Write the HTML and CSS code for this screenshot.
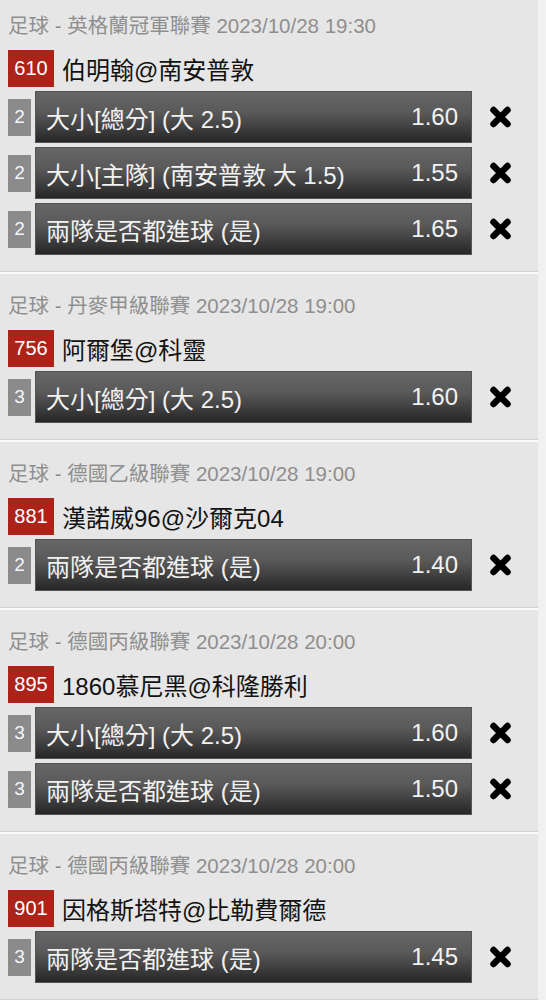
FILE: index.html
```html
<!DOCTYPE html>
<html lang="zh-Hant">
<head>
    <meta charset="utf-8">
    <title>投注單</title>
    <link rel="stylesheet" href="styles.css">
</head>
<body>

    <div class="slip">

        <section class="match">
            <div class="league">足球 - 英格蘭冠軍聯賽 2023/10/28 19:30</div>
            <div class="teams"><span class="code">610</span><span class="name">伯明翰@南安普敦</span></div>
            <div class="bet">
                <span class="count">2</span>
                <div class="bar"><span class="pick">大小[總分] (大 2.5)</span><span class="odds">1.60</span></div>
                <span class="remove"><svg viewBox="0 0 24 24" width="25" height="24"><path d="M5 5L19 19M19 5L5 19" /></svg></span>
            </div>
            <div class="bet">
                <span class="count">2</span>
                <div class="bar"><span class="pick">大小[主隊] (南安普敦 大 1.5)</span><span class="odds">1.55</span></div>
                <span class="remove"><svg viewBox="0 0 24 24" width="25" height="24"><path d="M5 5L19 19M19 5L5 19" /></svg></span>
            </div>
            <div class="bet">
                <span class="count">2</span>
                <div class="bar"><span class="pick">兩隊是否都進球 (是)</span><span class="odds">1.65</span></div>
                <span class="remove"><svg viewBox="0 0 24 24" width="25" height="24"><path d="M5 5L19 19M19 5L5 19" /></svg></span>
            </div>
        </section>

        <section class="match">
            <div class="league">足球 - 丹麥甲級聯賽 2023/10/28 19:00</div>
            <div class="teams"><span class="code">756</span><span class="name">阿爾堡@科靈</span></div>
            <div class="bet">
                <span class="count">3</span>
                <div class="bar"><span class="pick">大小[總分] (大 2.5)</span><span class="odds">1.60</span></div>
                <span class="remove"><svg viewBox="0 0 24 24" width="25" height="24"><path d="M5 5L19 19M19 5L5 19" /></svg></span>
            </div>
        </section>

        <section class="match">
            <div class="league">足球 - 德國乙級聯賽 2023/10/28 19:00</div>
            <div class="teams"><span class="code">881</span><span class="name">漢諾威96@沙爾克04</span></div>
            <div class="bet">
                <span class="count">2</span>
                <div class="bar"><span class="pick">兩隊是否都進球 (是)</span><span class="odds">1.40</span></div>
                <span class="remove"><svg viewBox="0 0 24 24" width="25" height="24"><path d="M5 5L19 19M19 5L5 19" /></svg></span>
            </div>
        </section>

        <section class="match">
            <div class="league">足球 - 德國丙級聯賽 2023/10/28 20:00</div>
            <div class="teams"><span class="code">895</span><span class="name">1860慕尼黑@科隆勝利</span></div>
            <div class="bet">
                <span class="count">3</span>
                <div class="bar"><span class="pick">大小[總分] (大 2.5)</span><span class="odds">1.60</span></div>
                <span class="remove"><svg viewBox="0 0 24 24" width="25" height="24"><path d="M5 5L19 19M19 5L5 19" /></svg></span>
            </div>
            <div class="bet">
                <span class="count">3</span>
                <div class="bar"><span class="pick">兩隊是否都進球 (是)</span><span class="odds">1.50</span></div>
                <span class="remove"><svg viewBox="0 0 24 24" width="25" height="24"><path d="M5 5L19 19M19 5L5 19" /></svg></span>
            </div>
        </section>

        <section class="match">
            <div class="league">足球 - 德國丙級聯賽 2023/10/28 20:00</div>
            <div class="teams"><span class="code">901</span><span class="name">因格斯塔特@比勒費爾德</span></div>
            <div class="bet">
                <span class="count">3</span>
                <div class="bar"><span class="pick">兩隊是否都進球 (是)</span><span class="odds">1.45</span></div>
                <span class="remove"><svg viewBox="0 0 24 24" width="25" height="24"><path d="M5 5L19 19M19 5L5 19" /></svg></span>
            </div>
        </section>

    </div>

</body>
</html>
```

FILE: styles.css
```css
body {
    margin: 0;
    background: #f1f1f1;
    font-family: "Liberation Sans", "Noto Sans CJK TC", sans-serif;
}
.slip {
    width: 538px;
    background: #e6e6e6;
}
.match {
    padding: 20px 0 16px 8px;
    border-top: 2px solid #fbfbfb;
    border-bottom: 1px solid #d2d2d2;
}
.match:first-child {
    padding-top: 14px;
    border-top: none;
}
.league {
    font-size: 20.5px;
    line-height: 24px;
    color: #8f8f8f;
    margin-bottom: 12px;
    white-space: nowrap;
}
.teams {
    display: flex;
    align-items: center;
    gap: 8px;
    height: 37px;
    margin-bottom: 4px;
}
.code {
    width: 46px;
    height: 37px;
    display: flex;
    align-items: center;
    justify-content: center;
    background: #ac231a;
    color: #fff;
    font-size: 20px;
}
.name {
    font-size: 24px;
    color: #121212;
}
.bet {
    display: flex;
    align-items: center;
    height: 52px;
    margin-bottom: 4px;
}
.bet:last-child {
    margin-bottom: 0;
}
.count {
    width: 23px;
    height: 37px;
    margin-right: 4px;
    display: flex;
    align-items: center;
    justify-content: center;
    background: #8b8b8b;
    color: #f6f6f6;
    font-size: 19px;
}
.bar {
    width: 437px;
    height: 52px;
    box-sizing: border-box;
    display: flex;
    align-items: center;
    justify-content: space-between;
    padding: 0 13px 0 10px;
    background: linear-gradient(#656565 0%, #5a5a5a 40%, #3c3c3c 75%, #262626 100%);
    border: 1px solid #555;
    color: #f2f2f2;
    font-size: 24px;
    white-space: nowrap;
}
.remove {
    margin-left: 16px;
    width: 25px;
    height: 24px;
}
.remove svg {
    display: block;
    fill: none;
    stroke: #000;
    stroke-width: 6.5;
    stroke-linecap: round;
}
```
